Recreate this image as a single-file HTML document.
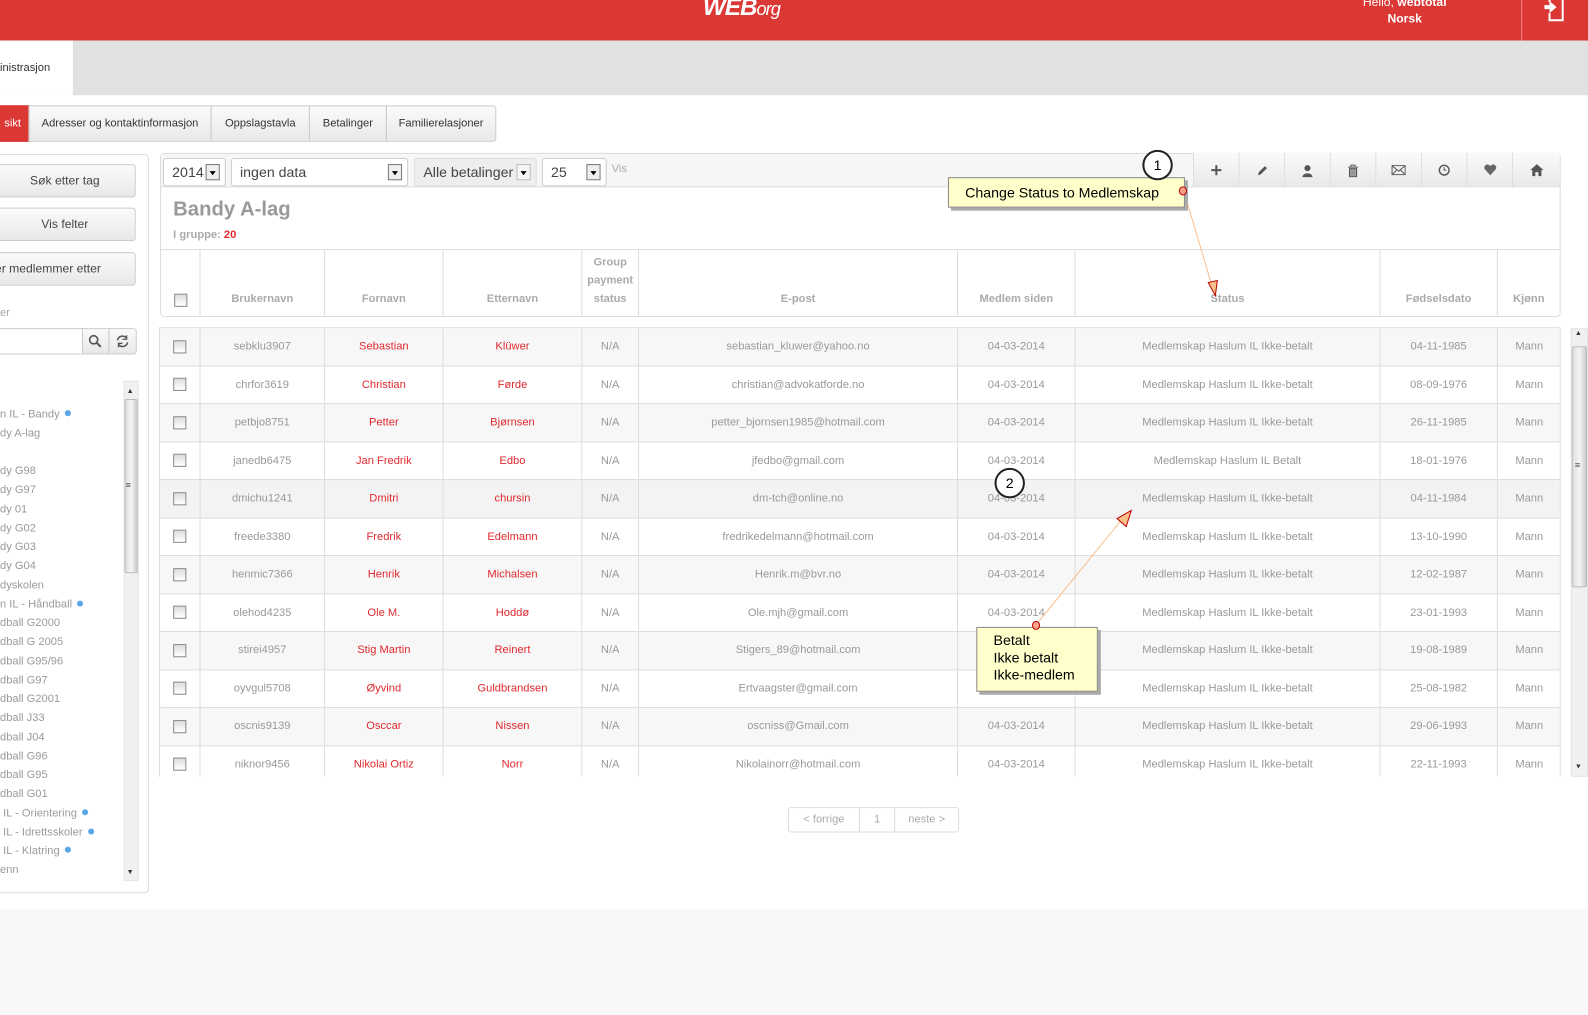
<!DOCTYPE html>
<html><head><meta charset="utf-8">
<style>
*{box-sizing:border-box;margin:0;padding:0}
html,body{width:1588px;height:1015px;overflow:hidden;background:#fff}
body{position:relative;font-family:"Liberation Sans",Arial,sans-serif;color:#999}
#wrap{position:absolute;left:0;top:0;width:1568px;height:1003px;transform:scale(1.01276);transform-origin:0 0}
.a{position:absolute}
.hdr{left:0;top:0;width:1568px;height:40px;background:#db3734}
.gbar{left:0;top:40px;width:1568px;height:54px;background:#e2e1e2}
.foot{left:0;top:898px;width:1568px;height:110px;background:#f8f8f8}
.tab{top:104px;height:36px;border:1px solid #ccc;background:linear-gradient(#fafafa,#e9e9e9);font-size:11px;color:#333;line-height:34px;text-align:center}
.btn{left:-6px;width:140px;height:33px;border:1px solid #ccc;border-radius:3px;background:linear-gradient(#fbfbfb,#e8e8e8);font-size:12px;color:#444;line-height:31px;text-align:center}
.tree{left:0;font-size:11px;color:#9a9a9a;line-height:14px}
.dot{display:inline-block;width:6px;height:6px;border-radius:50%;background:#5aa6e6;margin-left:5px;vertical-align:1px}
.sel{top:156px;height:28px;border:1px solid #ccc;border-radius:3px;background:#fff;font-size:14px;color:#444;line-height:26px;padding-left:8px}
.dd{position:absolute;right:5px;top:5px;width:14px;height:16px;border:1px solid #777;background:#eee}
.dd:after{content:"";position:absolute;left:3px;top:6px;border-left:3px solid transparent;border-right:3px solid transparent;border-top:4px solid #000}
.tb{top:151px;width:45px;height:34px;border-left:1px solid #ddd;background:linear-gradient(#fafafa,#e8e8e8);display:flex;align-items:center;justify-content:center}
.th{top:247px;height:65px;border-left:1px solid #ddd;font-size:11px;font-weight:bold;color:#aaa;text-align:center;display:flex;align-items:flex-end;justify-content:center;padding-bottom:8px;line-height:18px}
.row{left:158px;width:1383px;height:38px;border-top:1px solid #ddd;font-size:11px}
.row div{position:absolute;top:0;height:38px;line-height:36px;text-align:center;border-left:1px solid #ddd;white-space:nowrap;overflow:hidden}
.r{color:#e0282e}
.cb{display:inline-block;width:13px;height:13px;border:1px solid #888;background:linear-gradient(#ddd,#fff);vertical-align:middle}
.note{background:#ffffcc;border:1px solid #888;box-shadow:3px 3px 0 #aaa;color:#000;font-size:14px}
.circ{width:30px;height:30px;border:2px solid #222;border-radius:50%;background:#fff;color:#000;font-size:14px;text-align:center;line-height:26px}
</style></head><body><div id="wrap">
<div class="a hdr"></div>
<div class="a" style="left:694px;top:-6px;font:italic bold 24px 'Liberation Sans',sans-serif;color:#fff;letter-spacing:-1px">WEB<span style="font-size:18px;font-weight:normal">org</span></div>
<div class="a" style="left:1330px;top:-6px;width:114px;text-align:center;font-size:12px;color:#fff;line-height:16px">Hello, <b>webtotal</b><br><b>Norsk</b></div>
<div class="a" style="left:1502px;top:0;width:1px;height:40px;background:#e98a88"></div>
<svg class="a" style="left:1522px;top:0" width="28" height="22" viewBox="0 0 28 22"><path d="M8 0v2M8 13v7h13V0" fill="none" stroke="#fff" stroke-width="2"/><path d="M3 5h5V1l7 6-7 6V9H3z" fill="#fff"/></svg>
<div class="a gbar"></div>
<div class="a" style="left:0;top:40px;width:72px;height:54px;background:#fff;font-size:11px;color:#333;line-height:54px">inistrasjon</div>

<div class="a tab" style="left:-4px;width:33px;background:#db3734;color:#fff;border-color:#db3734">sikt</div>
<div class="a tab" style="left:28px;width:181px">Adresser og kontaktinformasjon</div>
<div class="a tab" style="left:208px;width:98px">Oppslagstavla</div>
<div class="a tab" style="left:305px;width:77px">Betalinger</div>
<div class="a tab" style="left:381px;width:109px;border-radius:0 3px 3px 0">Familierelasjoner</div>

<div class="a" style="left:-5px;top:152px;width:152px;height:730px;border:1px solid #ddd;border-radius:4px"></div>
<div class="a btn" style="top:162px">Søk etter tag</div>
<div class="a btn" style="top:205px">Vis felter</div>
<div class="a btn" style="top:249px;text-align:left;padding-left:0">er medlemmer etter</div>
<div class="a" style="left:0;top:303px;font-size:11px;color:#aaa">er</div>
<div class="a" style="left:-4px;top:324px;width:86px;height:26px;border:1px solid #ccc;border-radius:3px 0 0 3px"></div>
<div class="a" style="left:81px;top:324px;width:27px;height:26px;border:1px solid #ccc;background:linear-gradient(#fafafa,#e8e8e8)"></div>
<div class="a" style="left:107px;top:324px;width:28px;height:26px;border:1px solid #ccc;border-radius:0 3px 3px 0;background:linear-gradient(#fafafa,#e8e8e8)"></div>
<svg class="a" style="left:87px;top:330px" width="14" height="14"><circle cx="5.5" cy="5.5" r="4" fill="none" stroke="#555" stroke-width="1.6"/><path d="M8.5 8.5l4 4" stroke="#555" stroke-width="2"/></svg>
<svg class="a" style="left:114px;top:330px" width="14" height="14"><path d="M2 6a5 5 0 0 1 9-2M12 8a5 5 0 0 1-9 2" fill="none" stroke="#555" stroke-width="1.5"/><path d="M11 1v4H7M3 13V9h4" fill="none" stroke="#555" stroke-width="1.3"/></svg>
<div class="a" style="left:122px;top:376px;width:15px;height:494px;background:#f0f0f0;border:1px solid #e4e4e4"></div>
<div class="a" style="left:123px;top:394px;width:13px;height:172px;background:linear-gradient(90deg,#ddd,#f6f6f6,#ccc);border:1px solid #bbb;border-radius:2px"></div>
<div class="a" style="left:125px;top:383px;font-size:7px;color:#333">▲</div>
<div class="a" style="left:125px;top:858px;font-size:7px;color:#333">▼</div>
<div class="a" style="left:124px;top:474px;font-size:9px;color:#555">≡</div>
<div class="a tree" style="top:400px;line-height:18.75px">n IL - Bandy<span class="dot"></span><br>dy A-lag<br>&nbsp;<br>dy G98<br>dy G97<br>dy 01<br>dy G02<br>dy G03<br>dy G04<br>dyskolen<br>n IL - Håndball<span class="dot"></span><br>dball G2000<br>dball G 2005<br>dball G95/96<br>dball G97<br>dball G2001<br>dball J33<br>dball J04<br>dball G96<br>dball G95<br>dball G01<br>&nbsp;IL - Orientering<span class="dot"></span><br>&nbsp;IL - Idrettsskoler<span class="dot"></span><br>&nbsp;IL - Klatring<span class="dot"></span><br>enn</div>

<div class="a" style="left:158px;top:151px;width:1383px;height:162px;border:1px solid #ddd;border-radius:4px"></div>
<div class="a" style="left:159px;top:152px;width:1020px;height:33px;background:#f6f6f6;border-bottom:1px solid #ddd"></div>
<div class="a sel" style="left:161px;width:62px">2014<span class="dd"></span></div>
<div class="a sel" style="left:228px;width:175px">ingen data<span class="dd"></span></div>
<div class="a sel" style="left:409px;width:121px;background:#eee;border-color:#ddd">Alle betalinger<span class="dd" style="border-color:#bbb;background:#f6f6f6"></span></div>
<div class="a sel" style="left:535px;width:64px">25<span class="dd"></span></div>
<div class="a" style="left:604px;top:161px;font-size:11px;color:#aaa">Vis</div>
<div class="a" style="left:1178px;top:151px;width:363px;height:34px;border-bottom:1px solid #ccc"></div>
<div class="a tb" style="left:1178px"><svg width="12" height="12"><path d="M6 1v10M1 6h10" stroke="#555" stroke-width="2"/></svg></div>
<div class="a tb" style="left:1223px"><svg width="12" height="12"><path d="M2 11l1-3 6-6 2 2-6 6z" fill="#555"/></svg></div>
<div class="a tb" style="left:1268px"><svg width="12" height="13"><circle cx="6" cy="4" r="3" fill="#555"/><path d="M1 13c0-5 10-5 10 0z" fill="#555"/></svg></div>
<div class="a tb" style="left:1313px"><svg width="12" height="13"><path d="M1 3h10M4 3V1h4v2" stroke="#555" fill="none"/><path d="M2 4h8v9H2z" fill="#555"/><path d="M4 5v7M6 5v7M8 5v7" stroke="#ddd"/></svg></div>
<div class="a tb" style="left:1358px"><svg width="14" height="10"><rect x=".5" y=".5" width="13" height="9" fill="none" stroke="#555"/><path d="M1 1l6 5 6-5M1 9l4-4M13 9l-4-4" stroke="#555" fill="none"/></svg></div>
<div class="a tb" style="left:1403px"><svg width="12" height="12"><circle cx="6" cy="6" r="4.8" fill="none" stroke="#555" stroke-width="1.4"/><path d="M6 3v3h2" stroke="#555" fill="none"/></svg></div>
<div class="a tb" style="left:1448px"><svg width="13" height="12"><path d="M6.5 11L1 5a3 3 0 0 1 5.5-3 3 3 0 0 1 5.5 3z" fill="#666"/></svg></div>
<div class="a tb" style="left:1493px;width:47px"><svg width="13" height="12"><path d="M6.5 0L0 6h2v6h3V8h3v4h3V6h2z" fill="#555"/></svg></div>

<div class="a" style="left:171px;top:196px;font-size:20px;font-weight:bold;color:#999">Bandy A-lag</div>
<div class="a" style="left:171px;top:226px;font-size:11px;font-weight:bold;color:#aaa">I gruppe: <span style="color:#e0282e">20</span></div>
<div class="a" style="left:159px;top:246px;width:1381px;height:1px;background:#ddd"></div>

<div class="a th" style="left:159px;width:38px;border-left:none;padding-bottom:9px"><span class="cb"></span></div>
<div class="a th" style="left:197px;width:123px">Brukernavn</div>
<div class="a th" style="left:320px;width:117px">Fornavn</div>
<div class="a th" style="left:437px;width:137px">Etternavn</div>
<div class="a th" style="left:574px;width:56px">Group<br>payment<br>status</div>
<div class="a th" style="left:630px;width:315px">E-post</div>
<div class="a th" style="left:945px;width:116px">Medlem siden</div>
<div class="a th" style="left:1061px;width:301px">Status</div>
<div class="a th" style="left:1362px;width:116px">Fødselsdato</div>
<div class="a th" style="left:1478px;width:62px">Kjønn</div>

<div class="a" style="left:157px;top:323px;width:1384px;height:444px;overflow:hidden;border-left:1px solid #ddd;border-right:1px solid #ddd">
<div class="a row" style="left:0;top:0;background:#f7f7f7"><div style="left:0;width:39px;border:0"><span class="cb"></span></div><div style="left:39px;width:123px">sebklu3907</div><div class="r" style="left:162px;width:117px">Sebastian</div><div class="r" style="left:279px;width:137px">Klüwer</div><div style="left:416px;width:56px">N/A</div><div style="left:472px;width:315px">sebastian_kluwer@yahoo.no</div><div style="left:787px;width:116px">04-03-2014</div><div style="left:903px;width:301px">Medlemskap Haslum IL Ikke-betalt</div><div style="left:1204px;width:116px">04-11-1985</div><div style="left:1320px;width:63px">Mann</div></div>
<div class="a row" style="left:0;top:37.5px;background:#fff"><div style="left:0;width:39px;border:0"><span class="cb"></span></div><div style="left:39px;width:123px">chrfor3619</div><div class="r" style="left:162px;width:117px">Christian</div><div class="r" style="left:279px;width:137px">Førde</div><div style="left:416px;width:56px">N/A</div><div style="left:472px;width:315px">christian@advokatforde.no</div><div style="left:787px;width:116px">04-03-2014</div><div style="left:903px;width:301px">Medlemskap Haslum IL Ikke-betalt</div><div style="left:1204px;width:116px">08-09-1976</div><div style="left:1320px;width:63px">Mann</div></div>
<div class="a row" style="left:0;top:75px;background:#f7f7f7"><div style="left:0;width:39px;border:0"><span class="cb"></span></div><div style="left:39px;width:123px">petbjo8751</div><div class="r" style="left:162px;width:117px">Petter</div><div class="r" style="left:279px;width:137px">Bjørnsen</div><div style="left:416px;width:56px">N/A</div><div style="left:472px;width:315px">petter_bjornsen1985@hotmail.com</div><div style="left:787px;width:116px">04-03-2014</div><div style="left:903px;width:301px">Medlemskap Haslum IL Ikke-betalt</div><div style="left:1204px;width:116px">26-11-1985</div><div style="left:1320px;width:63px">Mann</div></div>
<div class="a row" style="left:0;top:112.5px;background:#fff"><div style="left:0;width:39px;border:0"><span class="cb"></span></div><div style="left:39px;width:123px">janedb6475</div><div class="r" style="left:162px;width:117px">Jan Fredrik</div><div class="r" style="left:279px;width:137px">Edbo</div><div style="left:416px;width:56px">N/A</div><div style="left:472px;width:315px">jfedbo@gmail.com</div><div style="left:787px;width:116px">04-03-2014</div><div style="left:903px;width:301px">Medlemskap Haslum IL Betalt</div><div style="left:1204px;width:116px">18-01-1976</div><div style="left:1320px;width:63px">Mann</div></div>
<div class="a row" style="left:0;top:150px;background:#f3f3f3"><div style="left:0;width:39px;border:0"><span class="cb"></span></div><div style="left:39px;width:123px">dmichu1241</div><div class="r" style="left:162px;width:117px">Dmitri</div><div class="r" style="left:279px;width:137px">chursin</div><div style="left:416px;width:56px">N/A</div><div style="left:472px;width:315px">dm-tch@online.no</div><div style="left:787px;width:116px">04-03-2014</div><div style="left:903px;width:301px">Medlemskap Haslum IL Ikke-betalt</div><div style="left:1204px;width:116px">04-11-1984</div><div style="left:1320px;width:63px">Mann</div></div>
<div class="a row" style="left:0;top:187.5px;background:#fff"><div style="left:0;width:39px;border:0"><span class="cb"></span></div><div style="left:39px;width:123px">freede3380</div><div class="r" style="left:162px;width:117px">Fredrik</div><div class="r" style="left:279px;width:137px">Edelmann</div><div style="left:416px;width:56px">N/A</div><div style="left:472px;width:315px">fredrikedelmann@hotmail.com</div><div style="left:787px;width:116px">04-03-2014</div><div style="left:903px;width:301px">Medlemskap Haslum IL Ikke-betalt</div><div style="left:1204px;width:116px">13-10-1990</div><div style="left:1320px;width:63px">Mann</div></div>
<div class="a row" style="left:0;top:225px;background:#f7f7f7"><div style="left:0;width:39px;border:0"><span class="cb"></span></div><div style="left:39px;width:123px">henmic7366</div><div class="r" style="left:162px;width:117px">Henrik</div><div class="r" style="left:279px;width:137px">Michalsen</div><div style="left:416px;width:56px">N/A</div><div style="left:472px;width:315px">Henrik.m@bvr.no</div><div style="left:787px;width:116px">04-03-2014</div><div style="left:903px;width:301px">Medlemskap Haslum IL Ikke-betalt</div><div style="left:1204px;width:116px">12-02-1987</div><div style="left:1320px;width:63px">Mann</div></div>
<div class="a row" style="left:0;top:262.5px;background:#fff"><div style="left:0;width:39px;border:0"><span class="cb"></span></div><div style="left:39px;width:123px">olehod4235</div><div class="r" style="left:162px;width:117px">Ole M.</div><div class="r" style="left:279px;width:137px">Hoddø</div><div style="left:416px;width:56px">N/A</div><div style="left:472px;width:315px">Ole.mjh@gmail.com</div><div style="left:787px;width:116px">04-03-2014</div><div style="left:903px;width:301px">Medlemskap Haslum IL Ikke-betalt</div><div style="left:1204px;width:116px">23-01-1993</div><div style="left:1320px;width:63px">Mann</div></div>
<div class="a row" style="left:0;top:300px;background:#f7f7f7"><div style="left:0;width:39px;border:0"><span class="cb"></span></div><div style="left:39px;width:123px">stirei4957</div><div class="r" style="left:162px;width:117px">Stig Martin</div><div class="r" style="left:279px;width:137px">Reinert</div><div style="left:416px;width:56px">N/A</div><div style="left:472px;width:315px">Stigers_89@hotmail.com</div><div style="left:787px;width:116px">04-03-2014</div><div style="left:903px;width:301px">Medlemskap Haslum IL Ikke-betalt</div><div style="left:1204px;width:116px">19-08-1989</div><div style="left:1320px;width:63px">Mann</div></div>
<div class="a row" style="left:0;top:337.5px;background:#fff"><div style="left:0;width:39px;border:0"><span class="cb"></span></div><div style="left:39px;width:123px">oyvgul5708</div><div class="r" style="left:162px;width:117px">Øyvind</div><div class="r" style="left:279px;width:137px">Guldbrandsen</div><div style="left:416px;width:56px">N/A</div><div style="left:472px;width:315px">Ertvaagster@gmail.com</div><div style="left:787px;width:116px">04-03-2014</div><div style="left:903px;width:301px">Medlemskap Haslum IL Ikke-betalt</div><div style="left:1204px;width:116px">25-08-1982</div><div style="left:1320px;width:63px">Mann</div></div>
<div class="a row" style="left:0;top:375px;background:#f7f7f7"><div style="left:0;width:39px;border:0"><span class="cb"></span></div><div style="left:39px;width:123px">oscnis9139</div><div class="r" style="left:162px;width:117px">Osccar</div><div class="r" style="left:279px;width:137px">Nissen</div><div style="left:416px;width:56px">N/A</div><div style="left:472px;width:315px">oscniss@Gmail.com</div><div style="left:787px;width:116px">04-03-2014</div><div style="left:903px;width:301px">Medlemskap Haslum IL Ikke-betalt</div><div style="left:1204px;width:116px">29-06-1993</div><div style="left:1320px;width:63px">Mann</div></div>
<div class="a row" style="left:0;top:412.5px;background:#fff"><div style="left:0;width:39px;border:0"><span class="cb"></span></div><div style="left:39px;width:123px">niknor9456</div><div class="r" style="left:162px;width:117px">Nikolai Ortiz</div><div class="r" style="left:279px;width:137px">Norr</div><div style="left:416px;width:56px">N/A</div><div style="left:472px;width:315px">Nikolainorr@hotmail.com</div><div style="left:787px;width:116px">04-03-2014</div><div style="left:903px;width:301px">Medlemskap Haslum IL Ikke-betalt</div><div style="left:1204px;width:116px">22-11-1993</div><div style="left:1320px;width:63px">Mann</div></div>
</div>

<div class="a" style="left:1551px;top:324px;width:17px;height:443px;background:#f0f0f0;border:1px solid #e4e4e4"></div>
<div class="a" style="left:1552px;top:342px;width:15px;height:238px;background:linear-gradient(90deg,#ddd,#f6f6f6,#ccc);border:1px solid #bbb;border-radius:2px"></div>
<div class="a" style="left:1555px;top:326px;font-size:7px;color:#333">▲</div>
<div class="a" style="left:1555px;top:754px;font-size:7px;color:#333">▼</div>
<div class="a" style="left:1555px;top:454px;font-size:9px;color:#555">≡</div>

<div class="a" style="left:778px;top:797px;width:169px;height:25px;border:1px solid #ddd;border-radius:3px;font-size:11px;color:#aaa;line-height:23px;display:flex">
<span style="width:70px;text-align:center;border-right:1px solid #ddd">&lt; forrige</span><span style="width:35px;text-align:center;border-right:1px solid #ddd">1</span><span style="flex:1;text-align:center">neste &gt;</span></div>

<div class="a foot"></div>

<svg class="a" style="left:0;top:0" width="1568" height="1003">
<line x1="1169" y1="189" x2="1199" y2="290" stroke="#fbc08c" stroke-width="1"/>
<path d="M1193 279l7 13 2-15z" fill="#fbbf8a" stroke="#b00" stroke-width="1"/>
<line x1="1023" y1="617" x2="1110" y2="510" stroke="#fbc08c" stroke-width="1"/>
<path d="M1117 504l-14 8 9 8z" fill="#fbbf8a" stroke="#b00" stroke-width="1"/>
</svg>
<div class="a note" style="left:936px;top:175px;width:234px;height:30px;line-height:28px;padding-left:16px">Change Status to Medlemskap</div>
<div class="a" style="left:1164px;top:184px;width:8px;height:9px;border-radius:50%;background:#f6a38a;border:1px solid #b00"></div>
<div class="a circ" style="left:1128px;top:148px">1</div>
<div class="a note" style="left:964px;top:619px;width:120px;height:64px;padding:4px 0 0 16px;line-height:17px">Betalt<br>Ikke betalt<br>Ikke-medlem</div>
<div class="a" style="left:1019px;top:613px;width:8px;height:9px;border-radius:50%;background:#f6a38a;border:1px solid #b00"></div>
<div class="a circ" style="left:982px;top:462px">2</div>
</div></body></html>
